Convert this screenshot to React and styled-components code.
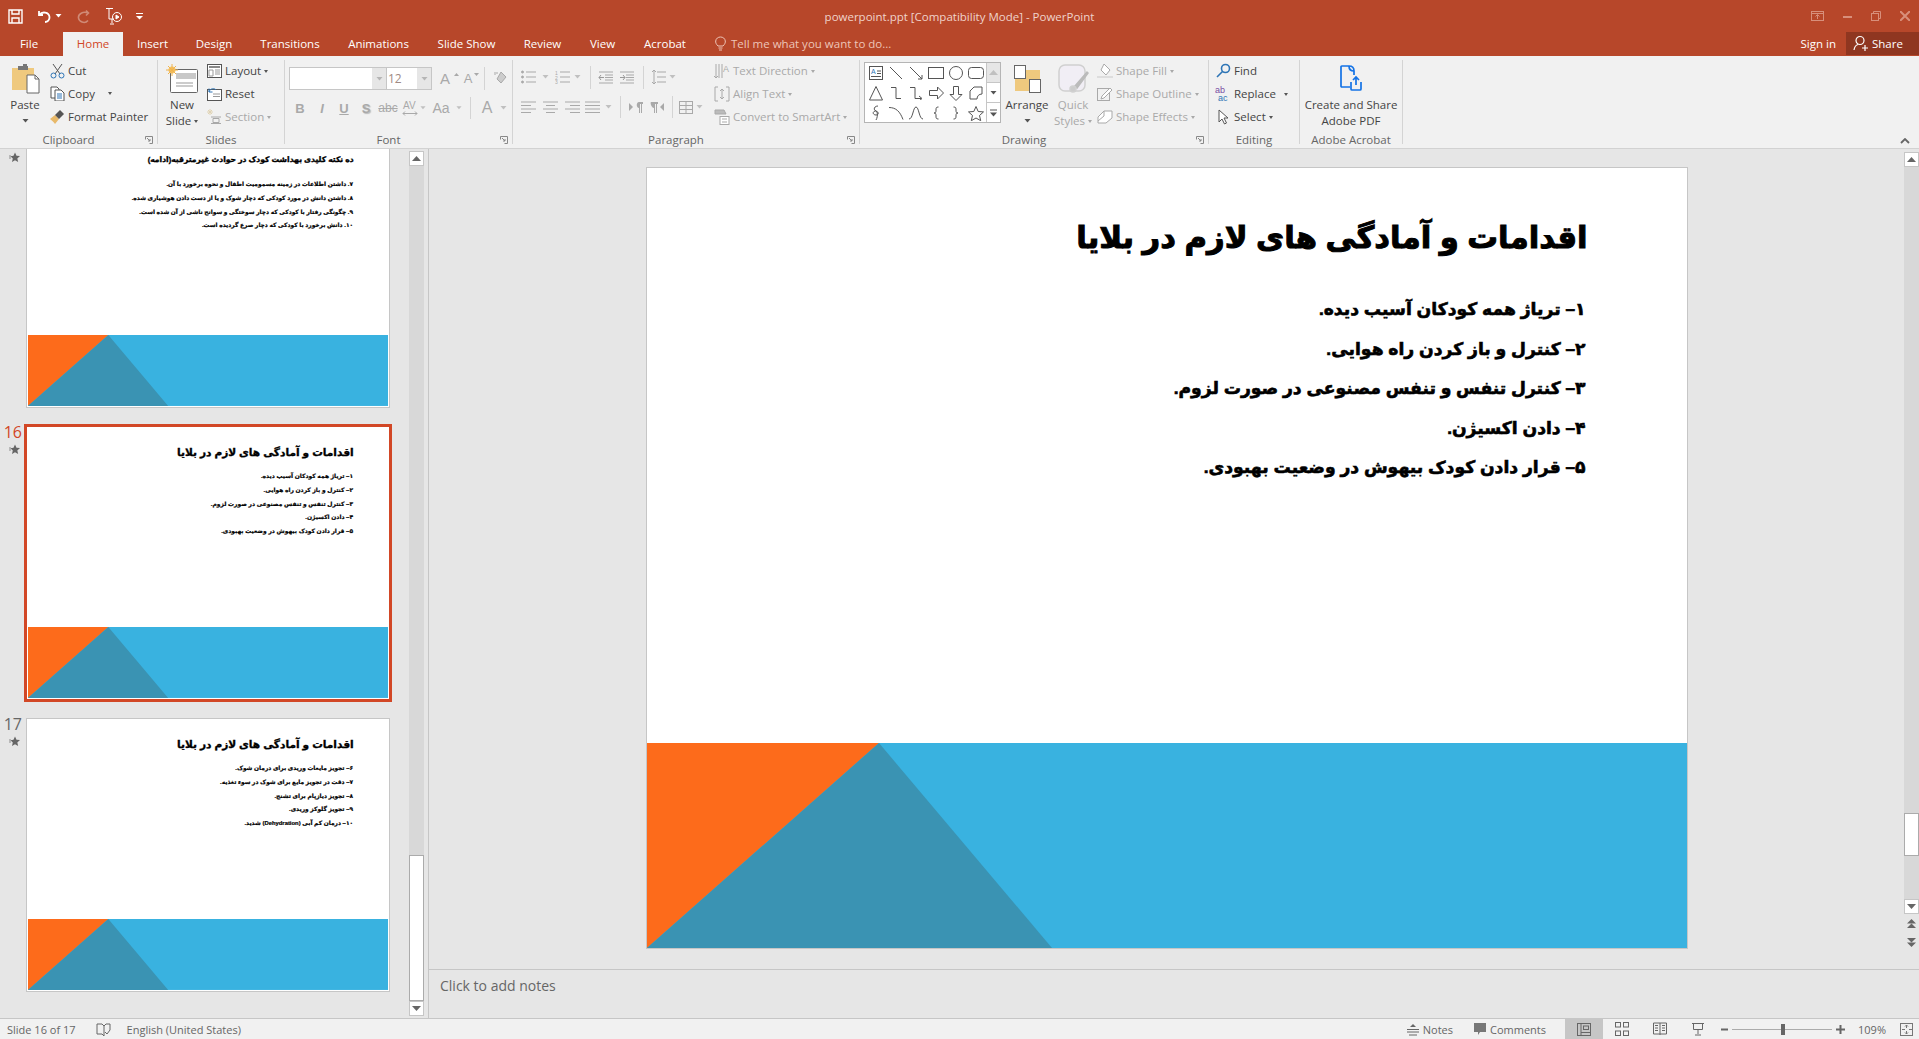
import React from "react";
import styled, { createGlobalStyle } from "styled-components";

const Global = createGlobalStyle`
  html, body { margin: 0; padding: 0; background: #e6e6e6; overflow: hidden; }
  * { box-sizing: border-box; }
`;

const UI = `"Open Sans", "Noto Sans", "Liberation Sans", sans-serif`;
const RED = "#d24726";
const GR = "#a9a9a9";

const Window = styled.div`
  width: 1919px; height: 1039px; display: flex; flex-direction: column; overflow: hidden;
  font-family: ${UI}; font-size: 11.5px; color: #444;
`;

/* ---------- title bar ---------- */
const TitleBar = styled.div`
  height: 32px; flex: none; background: #b7472a; display: grid; grid-template-columns: 1fr auto 1fr; align-items: center;
`;
const Qat = styled.div`display: flex; align-items: center; padding-left: 8px;`;
const QatSlot = styled.div`width: ${p => p.$w}px; flex: none; display: flex; align-items: center;`;
const TitleText = styled.div`color: #f0d3ca; font-size: 11.5px;`;
const WinControls = styled.div`display: flex; justify-content: flex-end; align-items: center; padding-right: 9px; gap: 19px;`;

const TabBar = styled.div`
  height: 24px; flex: none; background: #b7472a; display: flex; align-items: stretch; color: #fff;
`;
const Tab = styled.div`
  width: ${p => p.$w}px; flex: none; display: flex; align-items: center; justify-content: center; font-size: 11.5px;
  padding: 0 ${p => p.$pr || 0}px 2px 0;
  background: ${p => (p.$active ? "#f1f1f1" : "transparent")}; color: ${p => (p.$active ? RED : "#fff")};
`;
const TellMe = styled.div`
  margin-left: 15px; display: flex; align-items: center; gap: 5px; color: #eec5b8; font-size: 11.5px; padding-bottom: 2px;
`;
const Grow = styled.div`flex: 1;`;
const SignIn = styled.div`display: flex; align-items: center; margin-right: 10px; font-size: 11.5px; padding-bottom: 2px;`;
const Share = styled.div`
  width: 73px; height: 23px; background: #8f3620; display: flex; align-items: center; gap: 4px; padding: 0 0 1px 7px; font-size: 11.5px;
`;

/* ---------- ribbon ---------- */
const Ribbon = styled.div`
  height: 93px; flex: none; background: #f1f1f1; border-bottom: 1px solid #d2d2d2; padding-top: 4px; display: flex; position: relative;
`;
const Group = styled.div`
  width: ${p => p.$w}px; flex: none; height: 84px; border-right: 1px solid #d4d4d4; display: flex; flex-direction: column;
`;
const GroupBody = styled.div`
  height: 72px; flex: none; display: flex; padding-left: ${p => p.$pl || 0}px;
`;
const GroupLabel = styled.div`
  height: 12px; line-height: 16px; display: flex; color: #666; font-size: 11.5px;
`;
const LabelText = styled.div`flex: 1; text-align: center;`;
const Launcher = styled.div`width: 20px; flex: none; display: flex; justify-content: flex-end; align-items: center; height: 16px; padding-right: 4px;`;
const BigButton = styled.div`
  width: ${p => p.$w}px; flex: none; display: flex; flex-direction: column; align-items: center; line-height: 16px; white-space: nowrap;
  color: ${p => (p.$off ? GR : "#444")}; margin-left: ${p => p.$ml || 0}px;
`;
const BigIcon = styled.div`height: ${p => p.$h || 37}px; flex: none; display: flex; align-items: center; justify-content: center;`;
const SmallCol = styled.div`display: flex; flex-direction: column; margin-left: ${p => p.$ml || 0}px;`;
const SmallRow = styled.div`
  height: 23px; display: flex; align-items: center; gap: 3px; white-space: nowrap; padding-bottom: 2px;
  color: ${p => (p.$off ? GR : "#444")};
`;
const SmallIcon = styled.div`width: 16px; height: 16px; flex: none; display: flex; align-items: center; justify-content: center;`;
const Caret = styled.span`
  display: inline-block; width: 0; height: 0; border-left: 2.5px solid transparent; border-right: 2.5px solid transparent;
  border-top: 3px solid ${p => (p.$off ? GR : "#555")}; margin-left: ${p => p.$ml ?? 3}px; vertical-align: middle;
`;
const FontStack = styled.div`display: flex; flex-direction: column; padding: 7px 0 0 4px; width: 100%;`;
const ToolRow = styled.div`
  height: ${p => p.$h || 23}px; display: flex; align-items: center; margin-top: ${p => p.$mt || 0}px; margin-left: ${p => p.$ml || 0}px;
`;
const Combo = styled.div`
  width: ${p => p.$w}px; height: 23px; flex: none; background: #fff; border: 1px solid #c6c6c6; display: flex; justify-content: space-between;
  font-size: 12px; color: #a08a84; align-items: center; padding-left: 1px; margin-right: -1px;
`;
const ComboArrow = styled.div`
  width: 14px; height: 100%; background: #e6e6e6; display: flex; align-items: center; justify-content: center;
`;
const Tool = styled.div`
  width: ${p => p.$w}px; flex: none; display: flex; align-items: center; justify-content: center;
  color: ${GR}; font-weight: ${p => p.$b ? 700 : 400}; font-style: ${p => p.$i ? "italic" : "normal"};
  text-decoration: ${p => p.$u ? "underline" : p.$s ? "line-through" : "none"};
  text-shadow: ${p => p.$shadow ? "1px 1px 1px #bbb" : "none"};
  font-size: ${p => p.$fs || 13}px; font-family: "Liberation Sans", sans-serif;
`;
const ToolSep = styled.div`width: 1px; height: ${p => p.$h || 23}px; background: #d4d4d4; flex: none; margin: 0 ${p => p.$m || 6}px;`;
const ParaLeft = styled.div`width: 201px; flex: none; padding: 5px 0 0 7px; display: flex; flex-direction: column;`;
const Gallery = styled.div`
  width: 137px; height: 61px; margin: 2px 0 0 4px; flex: none; background: #fff; border: 1px solid #b5b5b5; display: flex;
`;
const ShapeGrid = styled.div`
  flex: 1; display: grid; grid-template-columns: repeat(6, 20px); grid-auto-rows: 20px; padding-left: 1px;
`;
const ShapeCell = styled.div`display: flex; align-items: center; justify-content: center;`;
const GalleryScroll = styled.div`width: 14px; flex: none; display: flex; flex-direction: column; border-left: 1px solid #c6c6c6;`;
const GalleryBtn = styled.div`
  flex: 1; background: ${p => (p.$g ? "#e6e6e6" : "#fff")}; border-bottom: 1px solid #c6c6c6; display: flex; align-items: center; justify-content: center;
  &:last-child { border-bottom: 0; }
`;
const Collapse = styled.div`position: absolute; right: 9px; bottom: 4px; display: flex;`;

/* ---------- main ---------- */
const Main = styled.div`flex: 1; min-height: 0; display: flex; background: #e6e6e6;`;
const ThumbPanel = styled.div`width: 429px; flex: none; display: flex; border-right: 1px solid #c6c6c6; overflow: hidden;`;
const ThumbList = styled.div`width: 409px; flex: none; display: flex; flex-direction: column; gap: 18px; margin-top: -15px;`;
const ThumbRow = styled.div`display: flex; height: 274px; flex: none;`;
const NumCol = styled.div`
  width: 26px; flex: none; display: flex; flex-direction: column; align-items: flex-end; padding-right: 5px;
  color: ${p => (p.$sel ? RED : "#666")}; font-size: 16px; line-height: 16px; 
`;
const Num = styled.div`height: 16px; margin-top: -2px; margin-right: -1px;`;
const StarWrap = styled.div`margin-top: 4px; margin-right: 1px;`;
const Thumb = styled.div`
  width: 364px; height: 274px; flex: none; padding: 1px; background: #fff;
  border: 1px solid ${p => (p.$sel ? RED : "#c6c6c6")};
  outline: ${p => (p.$sel ? `2px solid ${RED}` : "none")};
`;
const ScrollCol = styled.div`
  width: 15px; flex: none; display: flex; flex-direction: column; padding-top: ${p => p.$pt}px; padding-bottom: 2px;
`;
const ScrollBtn = styled.div`
  height: 15px; flex: none; background: #fff; border: 1px solid #c6c6c6; display: flex; align-items: center; justify-content: center;
`;
const Track = styled.div`
  background: #d8d8d8; flex: ${p => (p.$h ? "none" : 1)}; height: ${p => p.$h ? `${p.$h}px` : "auto"};
`;
const ScrollThumb = styled.div`height: ${p => p.$h}px; flex: none; background: #fff; border: 1px solid #ababab;`;
const PageArrow = styled.div`height: 18px; flex: none; display: flex; align-items: center; justify-content: center; margin-top: ${p => p.$mt || 0}px;`;

const Center = styled.div`flex: 1; min-width: 0; display: flex; flex-direction: column;`;
const EditArea = styled.div`height: 820px; flex: none; display: flex;`;
const Stage = styled.div`flex: 1; display: flex; justify-content: center; padding-top: 18px; align-items: flex-start;`;
const SlideFrame = styled.div`border: 1px solid #c6c6c6; background: #fff;`;
const Notes = styled.div`
  flex: 1; border-top: 1px solid #c6c6c6; display: flex; align-items: center; padding: 0 0 17px 11px; color: #666; font-size: 14px;
`;

/* slide */
const SlideBox = styled.div`
  width: ${p => 1040 * p.$s}px; height: ${p => 780 * p.$s}px; background: #fff; display: flex; flex-direction: column; overflow: hidden;
`;
const SlideText = styled.div`
  flex: 1; text-align: right; color: #000; font-weight: 700;
  font-family: "Liberation Sans", "DejaVu Sans", sans-serif; white-space: nowrap;
  padding: ${p => 40 * p.$s}px ${p => 99 * p.$s}px 0 0;
`;
const SlideTitle = styled.div`
  font-size: ${p => p.$fs * p.$s}px; line-height: ${p => 60 * p.$s}px; height: ${p => 60 * p.$s}px;
  -webkit-text-stroke: ${p => Math.max(0.25, 1 * p.$s)}px #000;
`;
const SlideLines = styled.div`margin-top: ${p => 22 * p.$s}px; padding-right: ${p => 2 * p.$s}px;`;
const SlideLine = styled.div`
  font-size: ${p => p.$fs * p.$s}px; line-height: ${p => 39.5 * p.$s}px; height: ${p => 39.5 * p.$s}px;
  -webkit-text-stroke: ${p => Math.max(0.2, 0.6 * p.$s)}px #000;
`;
const Band = styled.svg`display: block; flex: none; width: 100%; height: ${p => 205 * p.$s}px;`;

/* status */
const Status = styled.div`
  height: 21px; flex: none; background: #f1f1f1; border-top: 1px solid #c6c6c6; display: flex; align-items: center; color: #666; font-size: 11px;
`;
const StatusItem = styled.div`
  display: flex; align-items: center; gap: ${p => p.$gap ?? 4}px; margin-left: ${p => p.$ml || 0}px; margin-right: ${p => p.$mr || 0}px; height: 100%; flex: none;
  width: ${p => (p.$w ? `${p.$w}px` : "auto")}; justify-content: ${p => p.$w ? "center" : "flex-start"};
  background: ${p => (p.$active ? "#c6c6c6" : "transparent")};
`;
const ZoomTrack = styled.div`width: 100px; height: 1px; background: #ababab; margin: 0 4px; display: flex; justify-content: center; align-items: center;`;
const ZoomKnob = styled.div`width: 4px; height: 11px; background: #666; flex: none; margin-left: 2px;`;

/* ---------- icons ---------- */
const Ico = ({ w = 16, h = 16, vb, children, fill = "none", stroke = "#555", sw = 1 }) => (
  <svg width={w} height={h} viewBox={vb || `0 0 ${w} ${h}`} fill={fill} stroke={stroke} strokeWidth={sw} style={{ display: "block", flex: "none" }}>
    {children}
  </svg>
);
const Down = ({ c = "#555" }) => (
  <svg width="7" height="4" viewBox="0 0 7 4" style={{ display: "block" }}><path d="M0.5 0h6L3.5 3.5z" fill={c} /></svg>
);
const Up = ({ c = "#666" }) => (
  <svg width="9" height="5" viewBox="0 0 9 5" style={{ display: "block" }}><path d="M0 5h9L4.5 0z" fill={c} /></svg>
);
const DownBig = ({ c = "#666" }) => (
  <svg width="9" height="5" viewBox="0 0 9 5" style={{ display: "block" }}><path d="M0 0h9L4.5 5z" fill={c} /></svg>
);
const Star = () => (
  <svg width="11" height="11" viewBox="0 0 11 11" style={{ display: "block" }}>
    <path d="M6 0.5l1.5 3.3 3.5.3-2.7 2.3.9 3.5L6 8.2 3 10l.8-3.5L1.5 4.2l3-.4z" fill="#666" />
    <path d="M0 4h2M0 6h2" stroke="#666" strokeWidth=".7" />
  </svg>
);
const LauncherIcon = () => (
  <svg width="8" height="8" viewBox="0 0 8 8" fill="none" stroke="#888" style={{ display: "block" }}>
    <path d="M.5 3.5v-3h7v7h-3" /><path d="M2 2l3 3M5 3v2H3" />
  </svg>
);
const W = "#fff";
const Lines = ({ ys, x1 = 1, x2 = 15, c = GR }) => ys.map(y => <path key={y} d={`M${x1} ${y}H${x2}`} stroke={c} />);

const Shapes = [
  <Ico w={14} h={14} stroke="#555"><rect x=".5" y=".5" width="13" height="13" /><text x="2" y="8" fontSize="7" fill="#2e75b6" stroke="none" fontFamily="Liberation Sans">A</text><path d="M8 5h4M8 7.5h4M2 10.5h10" /></Ico>,
  <Ico w={14} h={14}><path d="M1 1l12 12" /></Ico>,
  <Ico w={14} h={14}><path d="M1 1l12 12M13 9v4H9" /></Ico>,
  <Ico w={16} h={14}><rect x=".5" y="1.5" width="15" height="11" /></Ico>,
  <Ico w={16} h={14}><circle cx="8" cy="7" r="6.5" /></Ico>,
  <Ico w={16} h={14}><rect x=".5" y="1.5" width="15" height="11" rx="3" /></Ico>,
  <Ico w={14} h={15}><path d="M7 .5L13.5 14H.5z" /></Ico>,
  <Ico w={14} h={14}><path d="M2 1.5h5v11h5" /></Ico>,
  <Ico w={14} h={14}><path d="M1 1.5h5v11h6M10 10l3 2.5-3 2.5" /></Ico>,
  <Ico w={15} h={14}><path d="M.5 4.5h8V1l6 6-6 6V9.500H.5z" /></Ico>,
  <Ico w={14} h={15}><path d="M4.500.5h5v8H13l-6 6-6-6h3.500z" /></Ico>,
  <Ico w={14} h={14}><path d="M1 13V5l4-4h8v7c-3 0-5 2-5 5z" /></Ico>,
  <Ico w={10} h={16}><path d="M7 1C3 1 2 5 5 6S8 10 5 10 1 7 4 6s3 6 1 9" /></Ico>,
  <Ico w={16} h={14}><path d="M1 1.500c7 0 11 4 14 12" /></Ico>,
  <Ico w={16} h={14}><path d="M1 13C5 13 5 1 8 1s3 12 7 12" /></Ico>,
  <Ico w={8} h={14}><path d="M6.500 1C4 1 4 2 4 4s0 3-2 3c2 0 2 1 2 3s0 3 2.500 3" /></Ico>,
  <Ico w={8} h={14}><path d="M1.500 1C4 1 4 2 4 4s0 3 2 3c-2 0-2 1-2 3s0 3-2.500 3" /></Ico>,
  <Ico w={16} h={15}><path d="M8 .5l2.200 5 5.300.4-4 3.600 1.200 5.200L8 12l-4.700 2.700 1.200-5.200-4-3.600 5.300-.4z" /></Ico>,
];

const Slide = ({ s, title, titleFs, lines, lineFs }) => (
  <SlideBox $s={s}>
    <SlideText $s={s} dir="rtl">
      <SlideTitle $s={s} $fs={titleFs}>{title}</SlideTitle>
      <SlideLines $s={s}>
        {lines.map(l => <SlideLine key={l} $s={s} $fs={lineFs}>{l}</SlideLine>)}
      </SlideLines>
    </SlideText>
    <Band $s={s} viewBox="0 0 1040 205" preserveAspectRatio="none">
      <rect width="1040" height="205" fill="#39b2e0" />
      <path d="M0 0H232L0 205z" fill="#fd6b1b" />
      <path d="M232 0L405 205H0z" fill="#3a93b3" />
    </Band>
  </SlideBox>
);

const T16 = "اقدامات و آمادگی های لازم در بلایا";
const L16 = [
  "۱– تریاژ همه کودکان آسیب دیده.",
  "۲– کنترل و باز کردن راه هوایی.",
  "۳– کنترل تنفس و تنفس مصنوعی در صورت لزوم.",
  "۴– دادن اکسیژن.",
  "۵– قرار دادن کودک بیهوش در وضعیت بهبودی.",
];
const T15 = "ده نکته کلیدی بهداشت کودک در حوادث غیرمترقبه(ادامه)";
const L15 = [
  "۷. داشتن اطلاعات در زمینه مسمومیت اطفال و نحوه برخورد با آن.",
  "۸. داشتن دانش در مورد کودکی که دچار شوک و یا از دست دادن هوشیاری شده.",
  "۹. چگونگی رفتار با کودکی که دچار سوختگی و سوانح ناشی از آن شده است.",
  "۱۰. دانش برخورد با کودکی که دچار صرع گردیده است.",
];
const L17 = [
  "۶– تجویز مایعات وریدی برای درمان شوک.",
  "۷– دقت در تجویز مایع برای شوک در سوء تغذیه.",
  "۸– تجویز دیازپام برای تشنج.",
  "۹– تجویز گلوکز وریدی.",
  "۱۰– درمان کم آبی (Dehydration) شدید.",
];

const TS = 360 / 1040;

export default function App() {
  return (
    <Window>
      <Global />
      <TitleBar>
        <Qat>
          <QatSlot $w={29}>
            <Ico w={15} h={15} stroke={W} sw={1.4}><path d="M1 1h13v13H1zM4 1v4h7V1M4 14V9h7v5" /></Ico>
          </QatSlot>
          <QatSlot $w={18}>
            <Ico w={15} h={15} stroke={W} sw={1.8}><path d="M2 2v4h4M2.500 6C5 2 12 3 12.500 8c.3 3-2 5-4.500 5" /></Ico>
          </QatSlot>
          <QatSlot $w={22}><Down c="#fff" /></QatSlot>
          <QatSlot $w={28}>
            <Ico w={14} h={15} stroke="#d08a76" sw={1.6}><path d="M9 1.500l2.500 2.500L9 6.500M11 4C6 2 1 5 1.500 9c.4 3.500 6 6.500 9.500 2.500" /></Ico>
          </QatSlot>
          <QatSlot $w={31}>
            <Ico w={18} h={18} stroke={W}><path d="M1 1.500h7M4 2v10h5M7 12v4M5 17h4" /><circle cx="12" cy="10" r="4.500" /><path d="M11 8v4l3-2z" fill={W} /></Ico>
          </QatSlot>
          <QatSlot $w={10}>
            <Ico w={7} h={8} stroke={W}><path d="M0 1.500h7" /><path d="M0 4h7L3.500 7.500z" fill={W} stroke="none" /></Ico>
          </QatSlot>
        </Qat>
        <TitleText>powerpoint.ppt [Compatibility Mode] - PowerPoint</TitleText>
        <WinControls>
          <Ico w={13} h={11} stroke="#d88f7b"><rect x=".5" y=".5" width="12" height="9" /><path d="M.5 2.500h12M6.500 8V4M4.500 5.500l2-2 2 2" /></Ico>
          <Ico w={9} h={3} stroke="#d88f7b" sw={2}><path d="M0 2h9" /></Ico>
          <Ico w={10} h={10} stroke="#d88f7b"><rect x=".5" y="2.500" width="7" height="7" /><path d="M2.500 2.500v-2h7v7h-2" /></Ico>
          <Ico w={10} h={10} stroke="#d88f7b" sw={2}><path d="M0 0l10 10M10 0L0 10" /></Ico>
        </WinControls>
      </TitleBar>

      <TabBar>
        <Tab $w={63} $pr={5}>File</Tab>
        <Tab $w={60} $active>Home</Tab>
        <Tab $w={59}>Insert</Tab>
        <Tab $w={64}>Design</Tab>
        <Tab $w={88}>Transitions</Tab>
        <Tab $w={89}>Animations</Tab>
        <Tab $w={87}>Slide Show</Tab>
        <Tab $w={65}>Review</Tab>
        <Tab $w={55}>View</Tab>
        <Tab $w={70}>Acrobat</Tab>
        <TellMe>
          <Ico w={11} h={15} stroke="#eec5b8"><path d="M3 10C1 8 .5 6.500 .7 5 1 2.500 3 1 5.500 1S10 2.500 10.300 5c.2 1.500-.3 3-2.300 5zM3.500 12h4M4 14h3" /></Ico>
          Tell me what you want to do...
        </TellMe>
        <Grow />
        <SignIn>Sign in</SignIn>
        <Share>
          <Ico w={15} h={16} stroke={W} sw={1.2}><circle cx="7" cy="5.500" r="4" /><path d="M1 15c.5-3 2-5 4-5.500M9 13h6M12 10v6" /></Ico>
          Share
        </Share>
      </TabBar>

      <Ribbon>
        <Group $w={158}>
          <GroupBody $pl={4}>
            <BigButton $w={42}>
              <BigIcon>
                <Ico w={29} h={31} stroke="none">
                  <path d="M1 5h22v22H1z" fill="#efc97e" />
                  <path d="M8 3h8V1h-4v2zM7 3h10v4H7z" fill="#777" />
                  <path d="M16 12h8l4 4v14H16z" fill="#fff" stroke="#666" />
                  <path d="M24 12v4h4" stroke="#666" />
                </Ico>
              </BigIcon>
              Paste
              <BigIcon $h={16}><Down /></BigIcon>
            </BigButton>
            <SmallCol $ml={3}>
              <SmallRow>
                <SmallIcon>
                  <Ico w={15} h={16} stroke="#555"><path d="M3 1l7 10M12 1L5 11" /><circle cx="3.500" cy="12.500" r="2.500" stroke="#2e75b6" /><circle cx="11.500" cy="12.500" r="2.500" stroke="#2e75b6" /></Ico>
                </SmallIcon>
                Cut
              </SmallRow>
              <SmallRow>
                <SmallIcon>
                  <Ico w={15} h={15}><path d="M1 1h6l2 2v9H1z" fill="#fff" /><path d="M5 4h6l3 3v8H5z" fill="#fff" /><path d="M7 8h5M7 10h5M7 12h5" stroke="#2e75b6" /></Ico>
                </SmallIcon>
                Copy<Caret $ml={10} />
              </SmallRow>
              <SmallRow>
                <SmallIcon>
                  <Ico w={16} h={16} stroke="none"><path d="M1 10l5-4 4 4-4 5c-1-2-3-3-5-5z" fill="#e8b96a" /><path d="M6 6l5-5 4 4-5 5z" fill="#555" /></Ico>
                </SmallIcon>
                Format Painter
              </SmallRow>
            </SmallCol>
          </GroupBody>
          <GroupLabel><LabelText>Clipboard</LabelText><Launcher><LauncherIcon /></Launcher></GroupLabel>
        </Group>

        <Group $w={127}>
          <GroupBody>
            <BigButton $w={48}>
              <BigIcon>
                <Ico w={32} h={30}>
                  <rect x="4.500" y="5.500" width="27" height="23" rx="1" fill="#fff" stroke="#666" />
                  <rect x="10" y="9" width="20" height="6" fill="#c8c8c8" stroke="none" />
                  <path d="M10 19h17M10 22h17" stroke="#999" />
                  <circle cx="6" cy="6" r="3.500" fill="#f5c266" stroke="none" />
                  <path d="M6 0v12M0 6h12M2 2l8 8M10 2l-8 8" stroke="#f0b44c" />
                </Ico>
              </BigIcon>
              New
              <span>Slide<Caret /></span>
            </BigButton>
            <SmallCol>
              <SmallRow>
                <SmallIcon>
                  <Ico w={15} h={14}><rect x=".5" y=".5" width="14" height="13" fill="#fff" /><path d="M2 3h11" stroke="#888" strokeWidth="2" /><path d="M2 6h4v6H2zM8 6h5M8 8h5M8 10h5" stroke="#999" /></Ico>
                </SmallIcon>
                <span>Layout<Caret /></span>
              </SmallRow>
              <SmallRow>
                <SmallIcon>
                  <Ico w={15} h={14}><rect x=".5" y="2.500" width="14" height="11" fill="#fff" /><path d="M6 7h7M6 9.500h7" stroke="#999" /><path d="M2 5c1-4 6-4 7-2M2 1.500V5h3.500" stroke="#2e75b6" /></Ico>
                </SmallIcon>
                <span>Reset</span>
              </SmallRow>
              <SmallRow $off>
                <SmallIcon>
                  <Ico w={15} h={15} stroke={GR}><path d="M3 0v6M0 3h6M1 1l4 4M5 1L1 5" stroke="#e0d3b4" /><path d="M4 8h10M6 9.500h6v4H6zM4 14.500h10" /></Ico>
                </SmallIcon>
                <span>Section<Caret $off /></span>
              </SmallRow>
            </SmallCol>
          </GroupBody>
          <GroupLabel><LabelText>Slides</LabelText></GroupLabel>
        </Group>

        <Group $w={228}>
          <GroupBody>
            <FontStack>
              <ToolRow>
                <Combo $w={98}><span /><ComboArrow><Down c="#b5b5b5" /></ComboArrow></Combo>
                <Combo $w={46}>12<ComboArrow><Down c="#b5b5b5" /></ComboArrow></Combo>
                <Tool $w={8} />
                <Tool $w={12} $fs={15}>A</Tool>
                <Tool $w={11}><Ico w={5} h={12} stroke="none"><path d="M0 3h5L2.500 0z" fill={GR} /></Ico></Tool>
                <Tool $w={12} $fs={13}>A</Tool>
                <Ico w={5} h={12} stroke="none"><path d="M0 0h5L2.500 3z" fill={GR} /></Ico>
                <ToolSep $m={5} />
                <Tool $w={20}>
                  <Ico w={14} h={15} stroke={GR}><path d="M8 1l5 5-5 6-4-4z" fill="#ccc" /><path d="M4 3v-2M2 4V1" /></Ico>
                </Tool>
              </ToolRow>
              <ToolRow $mt={7} $h={22}>
                <Tool $w={22} $b>B</Tool>
                <Tool $w={22} $i $b>I</Tool>
                <Tool $w={22} $u $b>U</Tool>
                <Tool $w={22} $b $shadow>S</Tool>
                <Tool $w={22} $s $fs={12}>abc</Tool>
                <Tool $w={21}><Ico w={16} h={17} stroke={GR}><text x="1" y="9" fontSize="10" fill={GR} stroke="none" fontFamily="Liberation Sans">AV</text><path d="M1 13.500h14M3 11.500l-2 2 2 2M13 11.500l2 2-2 2" /></Ico></Tool>
                <Tool $w={6}><Down c="#c0c0c0" /></Tool>
                <Tool $w={30} $fs={14}>Aa</Tool>
                <Tool $w={6}><Down c="#c0c0c0" /></Tool>
                <ToolSep $m={8} $h={22} />
                <Tool $w={16} $fs={16}>A</Tool>
                <Tool $w={17}><Down c="#c0c0c0" /></Tool>
              </ToolRow>
            </FontStack>
          </GroupBody>
          <GroupLabel><LabelText>Font</LabelText><Launcher><LauncherIcon /></Launcher></GroupLabel>
        </Group>

        <Group $w={347}>
          <GroupBody>
            <ParaLeft>
              <ToolRow $h={24}>
                <Tool $w={16}><Ico w={15} h={14} stroke={GR}><circle cx="1.500" cy="2" r="1" fill={GR} /><circle cx="1.500" cy="7" r="1" fill={GR} /><circle cx="1.500" cy="12" r="1" fill={GR} /><Lines ys={[2, 7, 12]} x1={5} /></Ico></Tool>
                <Tool $w={18}><Down c="#c0c0c0" /></Tool>
                <Tool $w={16}><Ico w={15} h={14} stroke={GR}><text x="0" y="5" fontSize="5" fill={GR} stroke="none">1</text><text x="0" y="9.500" fontSize="5" fill={GR} stroke="none">2</text><text x="0" y="14" fontSize="5" fill={GR} stroke="none">3</text><Lines ys={[2, 7, 12]} x1={5} /></Ico></Tool>
                <Tool $w={15}><Down c="#c0c0c0" /></Tool>
                <ToolSep $m={5} />
                <Tool $w={20}><Ico w={16} h={13} stroke={GR}><Lines ys={[1, 12]} x1={1} /><Lines ys={[4, 6.500, 9]} x1={7} /><path d="M6 6.500H1M3 4L1 6.500 3 9" stroke="#999" /></Ico></Tool>
                <Tool $w={22}><Ico w={16} h={13} stroke={GR}><Lines ys={[1, 12]} x1={1} /><Lines ys={[4, 6.500, 9]} x1={7} /><path d="M1 6.500h5M4 4l2 2.500L4 9" stroke="#999" /></Ico></Tool>
                <ToolSep $m={5} />
                <Tool $w={18}><Ico w={15} h={16} stroke={GR}><path d="M3 1v14M1 3l2-2 2 2M1 13l2 2 2-2" /><Lines ys={[3, 8, 13]} x1={6} /></Ico></Tool>
                <Tool $w={10}><Down c="#c0c0c0" /></Tool>
              </ToolRow>
              <ToolRow $mt={7} $h={22} $ml={-3}>
                <Tool $w={22}><Ico w={15} h={12} stroke={GR}><path d="M0 1h15M0 4.500h10M0 8h15M0 11.500h10" /></Ico></Tool>
                <Tool $w={22}><Ico w={15} h={12} stroke={GR}><path d="M0 1h15M3 4.500h9M0 8h15M3 11.500h9" /></Ico></Tool>
                <Tool $w={22}><Ico w={15} h={12} stroke={GR}><path d="M0 1h15M5 4.500h10M0 8h15M5 11.500h10" /></Ico></Tool>
                <Tool $w={19}><Ico w={15} h={12} stroke={GR}><path d="M0 1h15M0 4.500h15M0 8h15M0 11.500h15" /></Ico></Tool>
                <Tool $w={13}><Down c="#c0c0c0" /></Tool>
                <ToolSep $m={5} $h={22} />
                <Tool $w={20}><Ico w={14} h={11} stroke="none"><path d="M0 1l4 4-4 4zM6 0h8v2h-1v9h-1V2h-1v9h-1V6c-3 0-3-6 0-6z" fill={GR} /></Ico></Tool>
                <Tool $w={21}><Ico w={14} h={11} stroke="none"><path d="M14 1l-4 4 4 4zM1 0h7v2H7v9H6V2H5v9H4V6C1 6 0 0 1 0z" fill={GR} /></Ico></Tool>
                <ToolSep $m={5} $h={22} />
                <Tool $w={15}><Ico w={14} h={13} stroke={GR}><rect x=".5" y=".5" width="13" height="12" /><path d="M.5 4.500h13M.5 8.500h13M7 .5v12" /></Ico></Tool>
                <Tool $w={12}><Down c="#c0c0c0" /></Tool>
              </ToolRow>
            </ParaLeft>
            <SmallCol>
              <SmallRow $off>
                <SmallIcon><Ico w={16} h={16} stroke={GR}><path d="M2 1v14M5 1v14M8 1v14M0 13l2 2 2-2" /><text x="9" y="9" fontSize="9" fill={GR} stroke="none" fontFamily="Liberation Sans">A</text></Ico></SmallIcon>
                <span>Text Direction<Caret $off /></span>
              </SmallRow>
              <SmallRow $off>
                <SmallIcon><Ico w={16} h={16} stroke={GR}><path d="M4 1H1v14h3M12 1h3v14h-3M8 3v10M6 5l2-2 2 2M6 11l2 2 2-2" /></Ico></SmallIcon>
                <span>Align Text<Caret $off /></span>
              </SmallRow>
              <SmallRow $off>
                <SmallIcon><Ico w={16} h={16} stroke={GR}><path d="M1 1h9l2 4H1z" fill="#bbb" /><rect x="6" y="7.500" width="9" height="8" fill="#fff" /><path d="M8 10h5M8 13h5" /></Ico></SmallIcon>
                <span>Convert to SmartArt<Caret $off /></span>
              </SmallRow>
            </SmallCol>
          </GroupBody>
          <GroupLabel><LabelText>Paragraph</LabelText><Launcher><LauncherIcon /></Launcher></GroupLabel>
        </Group>

        <Group $w={349}>
          <GroupBody>
            <Gallery>
              <ShapeGrid>
                {Shapes.map((s, i) => <ShapeCell key={i}>{s}</ShapeCell>)}
              </ShapeGrid>
              <GalleryScroll>
                <GalleryBtn $g><Up c="#c0c0c0" /></GalleryBtn>
                <GalleryBtn><Down /></GalleryBtn>
                <GalleryBtn><Ico w={7} h={8} stroke="#555"><path d="M0 1h7" /><path d="M0 3.500h7L3.500 7.500z" fill="#555" stroke="none" /></Ico></GalleryBtn>
              </GalleryScroll>
            </Gallery>
            <BigButton $w={42} $ml={5}>
              <BigIcon>
                <Ico w={27} h={29} stroke="#666">
                  <rect x="10" y="6" width="16" height="16" fill="#efc97e" stroke="none" />
                  <rect x="1" y="11" width="16" height="16" fill="#efc97e" stroke="none" />
                  <rect x=".5" y="1.500" width="11" height="13" fill="#fff" />
                  <rect x="15.500" y="15.500" width="11" height="13" fill="#fff" />
                </Ico>
              </BigIcon>
              Arrange
              <BigIcon $h={16}><Down /></BigIcon>
            </BigButton>
            <BigButton $w={50} $off>
              <BigIcon>
                <Ico w={31} h={30} stroke="#d0d0d0" sw={1.5}>
                  <rect x="1" y="1" width="26" height="26" rx="6" fill="#f1eef5" />
                  <path d="M17 22L29 8l1 1-11 15z" fill="#bbb" stroke="#bbb" />
                  <circle cx="15" cy="25" r="3" fill="#ccc" />
                </Ico>
              </BigIcon>
              Quick
              <span>Styles<Caret $off /></span>
            </BigButton>
            <SmallCol $ml={-1}>
              <SmallRow $off>
                <SmallIcon><Ico w={16} h={16} stroke={GR}><path d="M7 1l6 6-4 5-5-5z" fill="#fff" /><path d="M0 14h16" stroke="#ddd" strokeWidth="2" /></Ico></SmallIcon>
                <span>Shape Fill<Caret $off /></span>
              </SmallRow>
              <SmallRow $off>
                <SmallIcon><Ico w={16} h={16} stroke={GR}><rect x=".5" y="2.500" width="12" height="12" /><path d="M5 10l8-8 2 2-8 8-3 1z" fill="#fff" /></Ico></SmallIcon>
                <span>Shape Outline<Caret $off /></span>
              </SmallRow>
              <SmallRow $off>
                <SmallIcon><Ico w={16} h={16} stroke={GR}><path d="M1 8l6-6h8v7l-6 5H1z" fill="#fff" /><path d="M7 2v5L1 12" /></Ico></SmallIcon>
                <span>Shape Effects<Caret $off /></span>
              </SmallRow>
            </SmallCol>
          </GroupBody>
          <GroupLabel><LabelText>Drawing</LabelText><Launcher><LauncherIcon /></Launcher></GroupLabel>
        </Group>

        <Group $w={91}>
          <GroupBody $pl={6}>
            <SmallCol>
              <SmallRow>
                <SmallIcon><Ico w={15} h={15} stroke="#2e75b6" sw={1.6}><circle cx="9.500" cy="5.500" r="4" /><path d="M6.500 8.500L1 14" /></Ico></SmallIcon>
                Find
              </SmallRow>
              <SmallRow>
                <SmallIcon>
                  <Ico w={16} h={16} stroke="none">
                    <text x="0" y="7" fontSize="9" fill="#7a4fa3" fontFamily="Liberation Sans">ab</text>
                    <text x="3" y="15" fontSize="9" fill="#2e75b6" fontFamily="Liberation Sans">ac</text>
                  </Ico>
                </SmallIcon>
                <span>Replace<Caret $ml={8} /></span>
              </SmallRow>
              <SmallRow>
                <SmallIcon><Ico w={13} h={16} stroke="#555"><path d="M2 1v12l3-3 2.500 5 2-1L7 9h4z" fill="#fff" /></Ico></SmallIcon>
                <span>Select<Caret /></span>
              </SmallRow>
            </SmallCol>
          </GroupBody>
          <GroupLabel><LabelText>Editing</LabelText></GroupLabel>
        </Group>

        <Group $w={103}>
          <GroupBody>
            <BigButton $w={102}>
              <BigIcon>
                <Ico w={24} h={27} stroke="#1473e6" sw={1.7}>
                  <path d="M11 22H3c-1 0-1-1-1-1V2s0-1 1-1h7c3 0 5 2 5 5v4" />
                  <path d="M10 1c0 3 1 5 5 5" />
                  <path d="M12 17v7c0 1 1 1 1 1h8c1 0 1-1 1-1v-7M17 20v-8M14 15l3-3 3 3" />
                </Ico>
              </BigIcon>
              Create and Share
              <span>Adobe PDF</span>
            </BigButton>
          </GroupBody>
          <GroupLabel><LabelText>Adobe Acrobat</LabelText></GroupLabel>
        </Group>

        <Collapse>
          <Ico w={10} h={6} stroke="#666" sw={1.8}><path d="M1 5l4-4 4 4" /></Ico>
        </Collapse>
      </Ribbon>

      <Main>
        <ThumbPanel>
          <ThumbList>
            <ThumbRow>
              <NumCol><Num /><StarWrap><Star /></StarWrap></NumCol>
              <Thumb><Slide s={TS} title={T15} titleFs={22} lines={L15} lineFs={17} /></Thumb>
            </ThumbRow>
            <ThumbRow>
              <NumCol $sel><Num>16</Num><StarWrap><Star /></StarWrap></NumCol>
              <Thumb $sel><Slide s={TS} title={T16} titleFs={30.7} lines={L16} lineFs={17.2} /></Thumb>
            </ThumbRow>
            <ThumbRow>
              <NumCol><Num>17</Num><StarWrap><Star /></StarWrap></NumCol>
              <Thumb><Slide s={TS} title={T16} titleFs={30.7} lines={L17} lineFs={17} /></Thumb>
            </ThumbRow>
          </ThumbList>
          <ScrollCol $pt={2}>
            <ScrollBtn><Up /></ScrollBtn>
            <Track />
            <ScrollThumb $h={146} />
            <ScrollBtn><DownBig /></ScrollBtn>
          </ScrollCol>
        </ThumbPanel>
        <Center>
          <EditArea>
            <Stage>
              <SlideFrame><Slide s={1} title={T16} titleFs={30.7} lines={L16} lineFs={17.2} /></SlideFrame>
            </Stage>
            <ScrollCol $pt={3}>
              <ScrollBtn><Up /></ScrollBtn>
              <Track $h={646} />
              <ScrollThumb $h={43} />
              <Track $h={43} />
              <ScrollBtn><DownBig /></ScrollBtn>
              <PageArrow $mt={1}><Ico w={9} h={10} stroke="none"><path d="M0 9h9L4.500 4.500z" fill="#666" /><path d="M4.500 0L9 4.500H0z" fill="#666" /></Ico></PageArrow>
              <PageArrow><Ico w={9} h={10} stroke="none"><path d="M0 1h9L4.500 5.500z" fill="#666" /><path d="M0 5.500h9L4.500 10z" fill="#666" /></Ico></PageArrow>
            </ScrollCol>
          </EditArea>
          <Notes>Click to add notes</Notes>
        </Center>
      </Main>

      <Status>
        <StatusItem $ml={7}>Slide 16 of 17</StatusItem>
        <StatusItem $ml={20}>
          <Ico w={15} h={13} stroke="#666"><path d="M1 1h5l2 2 2-2h4v6M1 1v10h5l2 2M8 3v10M9 9l2 2 3-4" /></Ico>
        </StatusItem>
        <StatusItem $ml={16}>English (United States)</StatusItem>
        <Grow />
        <StatusItem>
          <Ico w={12} h={13} stroke="#666"><path d="M0 6.500h12M0 9h12M2 12h8" /><path d="M3 4l3-3 3 3z" fill="#666" stroke="none" /></Ico>
          Notes
        </StatusItem>
        <StatusItem $ml={21}>
          <Ico w={12} h={12} stroke="none"><path d="M0 0h12v9H6l-2 3V9H0z" fill="#777" /></Ico>
          Comments
        </StatusItem>
        <StatusItem $ml={19} $w={38} $active>
          <Ico w={14} h={13} stroke="#666"><rect x=".5" y=".5" width="13" height="12" /><path d="M4 .5v12M4 9.500h9.500" /><rect x="6.500" y="3" width="5" height="3.500" /></Ico>
        </StatusItem>
        <StatusItem $w={38}>
          <Ico w={14} h={14} stroke="#666"><rect x=".5" y=".5" width="5" height="4.500" /><rect x="8.500" y=".5" width="5" height="4.500" /><rect x=".5" y="9" width="5" height="4.500" /><rect x="8.500" y="9" width="5" height="4.500" /></Ico>
        </StatusItem>
        <StatusItem $w={38}>
          <Ico w={14} h={14} stroke="#666"><path d="M.5 1h13v11H.5zM7 1v12M2 3.500h3M2 6h3M2 8.500h3M9 3.500h3M9 6h3M9 8.500h3" /></Ico>
        </StatusItem>
        <StatusItem $w={38}>
          <Ico w={14} h={14} stroke="#666"><path d="M1 1.500h12M2.500 2v5.500h9V2M7 7.500V12M4 13h6" /></Ico>
        </StatusItem>
        <StatusItem $ml={4} $gap={0}>
          <Ico w={7} h={3} stroke="#666" sw={2}><path d="M0 1.500h7" /></Ico>
          <ZoomTrack><ZoomKnob /></ZoomTrack>
          <Ico w={9} h={9} stroke="#666" sw={2}><path d="M0 4.500h9M4.500 0v9" /></Ico>
        </StatusItem>
        <StatusItem $ml={13}>109%</StatusItem>
        <StatusItem $ml={14} $mr={6}>
          <Ico w={13} h={13} stroke="#777"><rect x=".5" y=".5" width="12" height="12" /><path d="M6.500 2v3M5 3.500l1.500-1.500L8 3.500M6.500 11V8M5 9.500L6.500 11 8 9.500M2 6.500h3M9 6.500h3" /></Ico>
        </StatusItem>
      </Status>
    </Window>
  );
}
